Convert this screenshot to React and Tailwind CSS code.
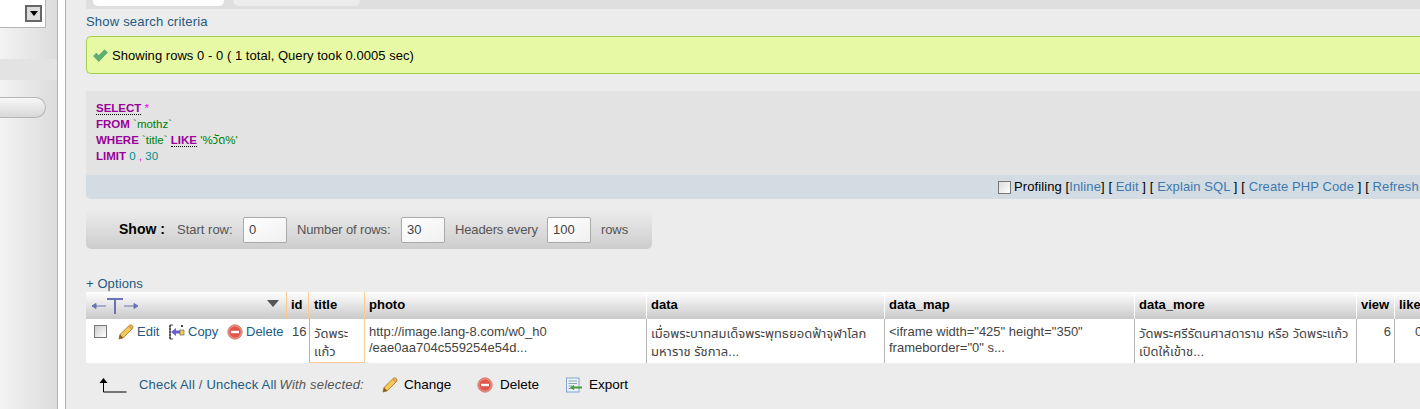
const F = "font-['Liberation_Sans','Noto_Sans_Thai','Noto_Sans',sans-serif]";
const LINK = "text-[#235a81]";
const SOFT = "text-[#3f78ad]";

function Pencil() {
  return (
    <svg width="16" height="16" viewBox="0 0 16 16" className="block">
      <path d="M1 15 L2 10.5 L11.5 1.2 Q13 0.4 14.3 1.6 Q15.6 3 14.6 4.4 L5.3 13.8 Z" fill="#f2c95a" stroke="#b8822c" strokeWidth="1" />
      <path d="M1 15 L2 10.5 L5.3 13.8 Z" fill="#8a5a20" />
      <path d="M11 2 L14 5" stroke="#d9975a" strokeWidth="1.5" />
    </svg>
  );
}
function Minus() {
  return (
    <svg width="16" height="16" viewBox="0 0 16 16" className="block">
      <circle cx="8" cy="8" r="7.2" fill="#ea8f85" stroke="#cf7268" strokeWidth="0.8" />
      <circle cx="8" cy="8" r="5.6" fill="#e2564a" />
      <rect x="4" y="6.8" width="8" height="2.4" fill="#fff" />
    </svg>
  );
}
function Copy() {
  return (
    <svg width="16" height="16" viewBox="0 0 16 16" className="block">
      <path d="M1 1 H4 M1 1 V15 M1 15 H4" stroke="#444" strokeWidth="1.2" fill="none" />
      <path d="M1 1 V15" stroke="#444" strokeWidth="1.4" strokeDasharray="2 1" fill="none" />
      <path d="M2 8 L7 4 V6.5 H11 V9.5 H7 V12 Z" fill="#6a5fd0" />
      <rect x="11" y="6" width="4" height="5" fill="#f2d24a" stroke="#555" strokeWidth="0.6" />
      <rect x="12" y="1" width="2" height="2" fill="#444" />
    </svg>
  );
}
function Export() {
  return (
    <svg width="16" height="16" viewBox="0 0 16 16" className="block">
      <rect x="0.5" y="1" width="12.5" height="14" fill="#eef4fa" stroke="#7ea3cf" />
      <path d="M2.5 4 H11 M2.5 6.5 H11 M2.5 9 H6 M2.5 11.5 H6" stroke="#8aa0b8" />
      <path d="M4 10.5 L8 7.8 V9.5 H16 V11.5 H8 V13.2 Z" fill="#4a9a3c" />
    </svg>
  );
}
function Check() {
  return (
    <svg width="15" height="13" viewBox="0 0 15 13" className="block">
      <path d="M0.5 7 L3.2 4.2 L5.8 6.6 L11.5 0.8 L14.5 3.6 L5.8 12.4 Z" fill="#5fae72" stroke="#4b9a64" strokeWidth="0.6" />
    </svg>
  );
}

function Head({ children, w, accent = false, noBorder = false }) {
  return (
    <div
      className={`${w} shrink-0 h-[27px] bg-gradient-to-b from-white to-[#c9c9c9] font-bold text-[13px] text-black pl-[4px] pt-[4px] leading-[17px] ${accent ? "border-r border-[#fcc98f]" : noBorder ? "" : "border-r border-white"}`}
    >
      {children}
    </div>
  );
}
function Cell({ children, w, thai = false, className = "" }) {
  return (
    <div className={`${w} shrink-0 h-[44px] bg-white text-[13px] whitespace-nowrap text-[#444] pl-[4px] border-r border-[#b5b5b5] overflow-hidden ${thai ? "leading-[18px] pt-[6px]" : "leading-[16px] pt-[5px]"} ${className}`}>
      {children}
    </div>
  );
}

function NumInput({ value }) {
  return (
    <div className="w-[44px] shrink-0 h-[26px] bg-gradient-to-br from-white to-[#f0f0f0] border border-[#aaa] rounded-[2px] text-[13px] text-[#444] pl-[5px] leading-[24px]">
      {value}
    </div>
  );
}

export default function App() {
  return (
    <div className={`${F} flex w-[1420px] h-[409px] overflow-hidden bg-[#ececec] text-[13px]`}>
      {/* left navigation */}
      <div className="w-[57px] shrink-0 bg-gradient-to-r from-[#f3f3f3] to-[#dcdcdc] flex flex-col">
        <div className="h-[28px] w-[46px] bg-white border border-[#b5b5b5] border-l-0 border-t-0 flex justify-end items-center pr-[3px]">
          <div className="w-[17px] h-[17px] border-2 border-[#666] bg-[#ddd] flex items-center justify-center">
            <span className="w-0 h-0 border-x-[4px] border-x-transparent border-t-[5px] border-t-black"></span>
          </div>
        </div>
        <div className="h-[21px] mt-[31px] bg-[#e3e3e3]"></div>
        <div className="h-[21px] w-[46px] mt-[17px] bg-gradient-to-b from-[#f8f8f8] to-[#d8d8d8] border border-[#b5b5b5] border-l-0 rounded-r-full"></div>
      </div>
      <div className="w-[9px] shrink-0 bg-white border-x border-[#b0b0b0]"></div>

      {/* main */}
      <div className="flex-1 min-w-0 pl-[20px] flex flex-col">
        <div className="h-[9px] bg-[#dfdfdf] flex gap-[9px] pl-[7px] shrink-0">
          <div className="w-[131px] h-[6px] bg-white rounded-b-[5px]"></div>
          <div className="w-[127px] h-[6px] bg-[#ececec] rounded-b-[10px]"></div>
        </div>

        <div className={`${LINK} leading-[14px] mt-[6px] tracking-[0.2px]`}>Show search criteria</div>

        <div className="mt-[7px] h-[38px] shrink-0 bg-[#e8f9a5] border border-[#a5cf48] border-r-0 rounded-l-[5px] flex items-center pl-[6px] gap-[4px] text-black pt-[1px] tracking-[0.04px]">
          <Check />
          <span>Showing rows 0 - 0 ( 1 total, Query took 0.0005 sec)</span>
        </div>

        <div className="mt-[17px] h-[84px] shrink-0 bg-[#e3e3e3] pl-[10px] pt-[9px] leading-[16px] text-[11.5px]">
          <div><span className="font-bold text-[#990099] border-b border-dotted border-black">SELECT</span> <span className="text-[#ff00ff]">*</span></div>
          <div><span className="font-bold text-[#990099]">FROM</span> <span className="text-[#008000]">`mothz`</span></div>
          <div><span className="font-bold text-[#990099]">WHERE</span> <span className="text-[#008000]">`title`</span> <span className="font-bold text-[#990099] border-b border-dotted border-black">LIKE</span> <span className="text-[#008000]">'%วัด%'</span></div>
          <div><span className="font-bold text-[#990099]">LIMIT</span> <span className="text-[#008b8b]">0</span> <span className="text-[#ff00ff]">,</span> <span className="text-[#008b8b]">30</span></div>
        </div>

        <div className="h-[24px] shrink-0 bg-[#d3dce3] rounded-bl-[5px] flex items-center pl-[912px] whitespace-nowrap overflow-hidden text-black tracking-[0.1px]">
          <span className="w-[13px] h-[13px] shrink-0 border border-[#777] bg-gradient-to-br from-[#ddd] to-white mr-[3px]"></span>
          <span>Profiling [<span className={SOFT}>Inline</span>] [ <span className={SOFT}>Edit</span> ] [ <span className={SOFT}>Explain SQL</span> ] [ <span className={SOFT}>Create PHP Code</span> ] [ <span className={SOFT}>Refresh</span> ]</span>
        </div>

        <div className="mt-[11px] w-[566px] h-[39px] shrink-0 bg-gradient-to-b from-[#ececec] to-[#cdcdcd] rounded-b-[5px] flex items-center pl-[33px] text-[#555] whitespace-nowrap">
          <b className="text-[14px] text-black w-[58px] shrink-0">Show :</b>
          <span className="w-[66px] shrink-0">Start row:</span>
          <NumInput value="0" />
          <span className="ml-[10px] w-[104px] shrink-0 tracking-[-0.13px]">Number of rows:</span>
          <NumInput value="30" />
          <span className="ml-[10px] w-[92px] shrink-0 tracking-[-0.13px]">Headers every</span>
          <NumInput value="100" />
          <span className="ml-[10px] tracking-[-0.1px]">rows</span>
        </div>

        <div className={`${LINK} leading-[14px] mt-[28px] tracking-[0.1px]`}>+ Options</div>

        <div className="mt-[1px] flex w-[1334px] overflow-hidden shrink-0">
          <div className="flex flex-col shrink-0">
            <div className="w-[201px] h-[27px] bg-gradient-to-b from-white to-[#c9c9c9] border-r border-[#fcc98f] flex items-center justify-between pl-[6px] pr-[6px]">
              <svg width="46" height="20" viewBox="0 0 46 20">
                <g stroke="#6a74b5" fill="#6a74b5" strokeWidth="1">
                  <path d="M0 10 H14" /><path d="M0 10 L4 7.5 V12.5 Z" />
                  <path d="M32 10 H46" /><path d="M46 10 L42 7.5 V12.5 Z" />
                </g>
                <path d="M15 3 H31 M23 3 V18" stroke="#6a74b5" strokeWidth="2" fill="none" />
              </svg>
              <span className="w-0 h-0 border-x-[6px] border-x-transparent border-t-[7px] border-t-[#555] mb-[4px] mr-[1px]"></span>
            </div>
            <div className="w-[201px] h-[44px] bg-white flex items-start pl-[8px] pt-[5px] text-[#235a81] whitespace-nowrap leading-[16px]">
              <span className="w-[13px] h-[13px] border border-[#777] bg-gradient-to-br from-[#ccc] to-white mr-[11px] mt-[1px] shrink-0"></span>
              <span className="mr-[3px] shrink-0"><Pencil /></span>
              <span className="w-[32px] shrink-0">Edit</span>
              <span className="mr-[3px] shrink-0"><Copy /></span>
              <span className="w-[39px] shrink-0">Copy</span>
              <span className="mr-[3px] shrink-0"><Minus /></span>
              <span>Delete</span>
            </div>
          </div>

          <div className="flex flex-col shrink-0">
            <div className="flex">
              <Head w="w-[22px]" accent>id</Head>
              <div className="w-[56px] shrink-0 h-[27px] bg-gradient-to-b from-white to-[#c9c9c9] border-r border-[#fcc98f] font-bold text-[13px] text-black pl-[5px] pt-[4px] leading-[17px]">title</div>
              <Head w="w-[282px]">photo</Head>
              <Head w="w-[238px]">data</Head>
              <Head w="w-[250px]">data_map</Head>
              <Head w="w-[222px]">data_more</Head>
              <Head w="w-[38px]">view</Head>
              <Head w="w-[26px]" noBorder>like</Head>
            </div>
            <div className="flex">
              <div className="w-[22px] shrink-0 h-[44px] bg-white text-[13px] leading-[16px] text-[#444] pl-[5px] pt-[5px]">16</div>
              <div className="w-[56px] shrink-0 h-[44px] bg-white border border-t-0 border-[#fcc98f] border-l-[#b5b5b5] text-[13px] leading-[18px] text-[#444] pl-[4px] pt-[6px]">วัดพระ<br />แก้ว</div>
              <Cell w="w-[282px]">http://image.lang-8.com/w0_h0<br />/eae0aa704c559254e54d...</Cell>
              <Cell w="w-[238px]" thai>เมื่อพระบาทสมเด็จพระพุทธยอดฟ้าจุฬาโลก<br />มหาราช รัชกาล...</Cell>
              <Cell w="w-[250px]">&lt;iframe width="425" height="350"<br />frameborder="0" s...</Cell>
              <Cell w="w-[222px]" thai>วัดพระศรีรัตนศาสดาราม หรือ วัดพระแก้ว<br />เปิดให้เข้าช...</Cell>
              <Cell w="w-[38px]" className="text-right pr-[3px]">6</Cell>
              <div className="w-[26px] shrink-0 h-[44px] bg-white text-[13px] leading-[16px] text-[#444] pl-[20px] pt-[5px] overflow-hidden">0</div>
            </div>
          </div>
        </div>

        <div className="flex items-center h-[44px] shrink-0 whitespace-nowrap pl-[13px]">
          <svg width="28" height="16" viewBox="0 0 28 16" className="mr-[12px] shrink-0">
            <path d="M4.5 5 V15 H27.5" stroke="#000" fill="none" />
            <path d="M0.5 6 L4.5 1 L8.5 6 Z" fill="#000" />
          </svg>
          <div className="tracking-[0.2px]">
            <span className={LINK}>Check All</span>
            <span className="text-[#555]">&nbsp;/&nbsp;</span>
            <span className={LINK}>Uncheck All</span>
            <i className="text-[#555] ml-[3px]">With selected:</i>
          </div>
          <span className="ml-[18px] mr-[6px] shrink-0"><Pencil /></span>
          <span className="text-black text-[13.5px] w-[73px] shrink-0">Change</span>
          <span className="mr-[7px] shrink-0"><Minus /></span>
          <span className="text-black text-[13.5px] w-[66px] shrink-0">Delete</span>
          <span className="mr-[7px] shrink-0"><Export /></span>
          <span className="text-black text-[13.5px]">Export</span>
        </div>
      </div>
    </div>
  );
}
